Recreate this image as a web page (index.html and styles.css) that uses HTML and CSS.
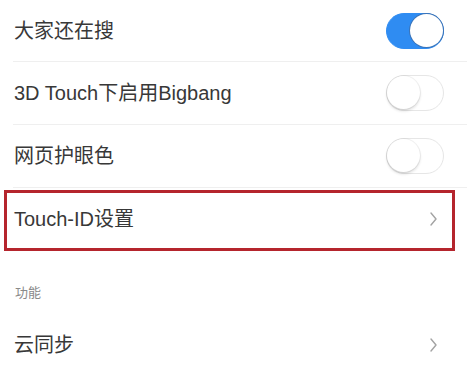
FILE: index.html
```html
<!DOCTYPE html>
<html lang="zh-CN">
<head>
<meta charset="utf-8">
<title>设置</title>
<link rel="stylesheet" href="styles.css">
</head>
<body>
<div class="list">
  <div class="row row-first">
    <span class="label">大家还在搜</span>
    <span class="switch on"><span class="knob"></span></span>
  </div>
  <div class="row">
    <span class="label">3D Touch下启用Bigbang</span>
    <span class="switch"><span class="knob"></span></span>
  </div>
  <div class="row">
    <span class="label">网页护眼色</span>
    <span class="switch"><span class="knob"></span></span>
  </div>
  <div class="row row-link row-last">
    <span class="label">Touch-ID设置</span>
    <svg class="chev" width="7" height="14" viewBox="0 0 7 14"><path d="M1 1 L6 7 L1 13" fill="none" stroke="#a3a3a3" stroke-width="1.4" stroke-linecap="round" stroke-linejoin="round"/></svg>
    <span class="highlight"></span>
  </div>
</div>
<div class="section">功能</div>
<div class="list">
  <div class="row row-link row-last">
    <span class="label">云同步</span>
    <svg class="chev" width="7" height="14" viewBox="0 0 7 14"><path d="M1 1 L6 7 L1 13" fill="none" stroke="#a3a3a3" stroke-width="1.4" stroke-linecap="round" stroke-linejoin="round"/></svg>
  </div>
</div>
</body>
</html>
```

FILE: styles.css
```css
html, body {
  margin: 0;
  padding: 0;
  background: #ffffff;
}
body {
  width: 467px;
  height: 376px;
  overflow: hidden;
  font-family: "Liberation Sans", "Noto Sans CJK SC", sans-serif;
  color: #333333;
}
.list {
  display: flex;
  flex-direction: column;
}
.row {
  position: relative;
  display: flex;
  align-items: center;
  justify-content: space-between;
  height: 62px;
  margin-left: 13px;
  padding-left: 1px;
  padding-right: 23px;
  border-bottom: 1px solid #efefef;
  box-sizing: content-box;
}
.row-first {
  height: 61px;
}
.row-last {
  border-bottom: none;
}
.row-link {
  padding-right: 30px;
}
.label {
  font-size: 20px;
  line-height: 24px;
  color: #383838;
}
.switch {
  position: relative;
  width: 58px;
  height: 36px;
  border-radius: 18px;
  box-sizing: border-box;
  border: 1.5px solid #e6e6e6;
  background: #ffffff;
  flex: none;
}
.switch .knob {
  position: absolute;
  top: 0;
  left: 0;
  width: 33px;
  height: 33px;
  border-radius: 50%;
  background: #ffffff;
  box-shadow: 0 2px 3px rgba(0, 0, 0, 0.14), 0 0 0 1px rgba(0, 0, 0, 0.05);
}
.switch.on {
  background: #2f8cf2;
  border-color: #2f8cf2;
}
.switch.on .knob {
  left: auto;
  right: 0;
  box-shadow: 0 0 0 1px #3b74b8;
}
.chev {
  display: block;
  flex: none;
}
.highlight {
  position: absolute;
  left: -9px;
  right: 12px;
  top: 2px;
  bottom: -1px;
  border: 3px solid #b5252d;
  pointer-events: none;
}
.section {
  padding: 34px 0 12px 15px;
  font-size: 13px;
  line-height: 18px;
  color: #8a8a8a;
}
```
